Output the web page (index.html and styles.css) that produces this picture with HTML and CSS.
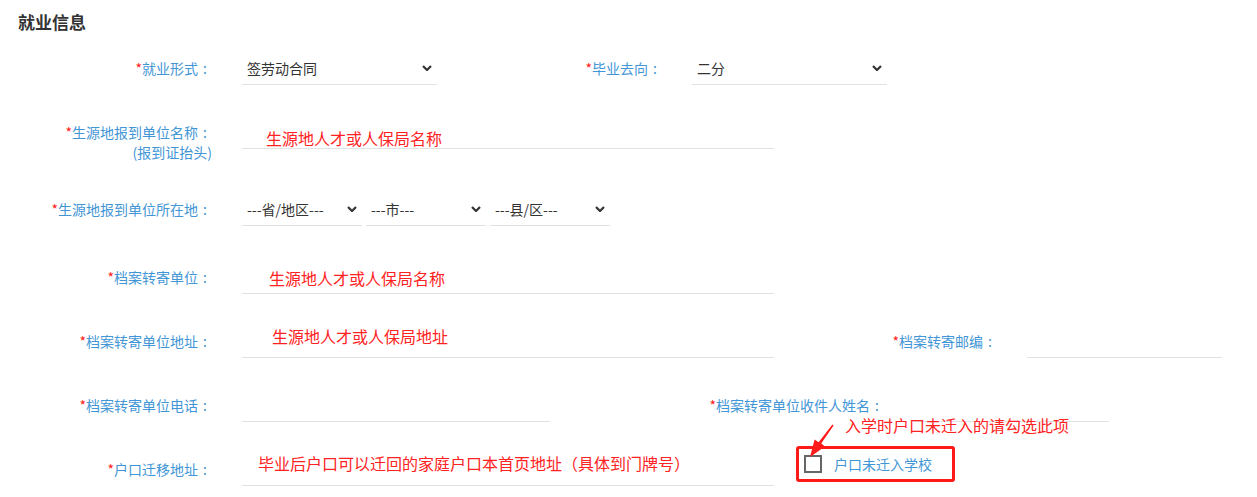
FILE: index.html
```html
<!DOCTYPE html>
<html lang="zh-CN">
<head>
    <meta charset="UTF-8">
    <meta name="viewport" content="width=device-width, initial-scale=1.0">
    <title>就业信息</title>
    <link rel="stylesheet" href="styles.css">
</head>
<body>
    <h2 class="title">就业信息</h2>

    <form class="job-form">
        <!-- 就业形式 / 毕业去向 -->
        <div class="row">
            <label class="label"><i>*</i>就业形式<b>:</b></label>
            <div class="select w195">
                <select><option>签劳动合同</option></select>
                <svg class="arrow" viewBox="0 0 10 6" width="10" height="6"><path d="M1 1l4 4 4-4" /></svg>
            </div>
            <label class="label lab-go"><i>*</i>毕业去向<b>:</b></label>
            <div class="select w195">
                <select><option>二分</option></select>
                <svg class="arrow" viewBox="0 0 10 6" width="10" height="6"><path d="M1 1l4 4 4-4" /></svg>
            </div>
        </div>

        <div class="row">
            <label class="label"><i>*</i>生源地报到单位名称<b>:</b><br>(报到证抬头)</label>
            <div class="field w532">
                <span class="note note-1">生源地人才或人保局名称</span>
            </div>
        </div>

        <div class="row">
            <label class="label"><i>*</i>生源地报到单位所在地<b>:</b></label>
            <div class="select w120">
                <select><option>---省/地区---</option></select>
                <svg class="arrow" viewBox="0 0 10 6" width="10" height="6"><path d="M1 1l4 4 4-4" /></svg>
            </div>
            <div class="select w120 ml4">
                <select><option>---市---</option></select>
                <svg class="arrow" viewBox="0 0 10 6" width="10" height="6"><path d="M1 1l4 4 4-4" /></svg>
            </div>
            <div class="select w120 ml4">
                <select><option>---县/区---</option></select>
                <svg class="arrow" viewBox="0 0 10 6" width="10" height="6"><path d="M1 1l4 4 4-4" /></svg>
            </div>
        </div>

        <div class="row spaced">
            <label class="label"><i>*</i>档案转寄单位<b>:</b></label>
            <div class="field w532">
                <span class="note note-2">生源地人才或人保局名称</span>
            </div>
        </div>

        <div class="row">
            <label class="label"><i>*</i>档案转寄单位地址<b>:</b></label>
            <div class="field w532">
                <span class="note note-3">生源地人才或人保局地址</span>
            </div>
            <label class="label lab-zip"><i>*</i>档案转寄邮编<b>:</b></label>
            <div class="field w195"></div>
        </div>

        <div class="row">
            <label class="label"><i>*</i>档案转寄单位电话<b>:</b></label>
            <div class="field w308"></div>
            <label class="label lab-name"><i>*</i>档案转寄单位收件人姓名<b>:</b></label>
            <div class="field w195"></div>
        </div>

        <div class="row">
            <label class="label"><i>*</i>户口迁移地址<b>:</b></label>
            <div class="field w532">
                <span class="note note-4">毕业后户口可以迁回的家庭户口本首页地址（具体到门牌号）</span>
            </div>
            <div class="hukou">
                <span class="check"></span>
                <span class="check-text">户口未迁入学校</span>
                <!-- 红色标注 -->
                <svg class="mark-arrow" viewBox="0 0 40 40" width="40" height="40">
                    <polygon points="33.6,5.4 21.2,23.6 25,26.4 10,37 14.6,19.6 18.6,22.2 32.4,4.6" />
                </svg>
                <span class="tip">入学时户口未迁入的请勾选此项</span>
            </div>
        </div>
    </form>
</body>
</html>
```

FILE: styles.css
```css
body {
    margin: 0;
    background-color: #fff;
    font-family: "Microsoft YaHei", "Noto Sans CJK SC", sans-serif;
    color: #333;
}

.title {
    margin: 0;
    padding: 10px 18px 0;
    font-size: 17px;
    line-height: 24px;
    font-weight: bold;
    color: #333;
}

.job-form {
    margin-top: 17px;
}

.row {
    display: flex;
    align-items: flex-start;
}

.row + .row {
    margin-top: 30px;
}

.row.spaced {
    margin-top: 34px;
}

/* 左边的标签 */
.label {
    flex: none;
    width: 212px;
    margin-right: 30px;
    padding-top: 7px;
    font-size: 14px;
    line-height: 20px;
    text-align: right;
    color: #4396d6;
}

.label i {
    font-style: normal;
    color: #ff1a1a;
}

/* 冒号占一个全角宽度, 居中 */
.label b {
    display: inline-block;
    width: 14px;
    font-weight: normal;
    text-align: center;
}

.lab-go {
    width: 225px;
}

.lab-zip {
    width: 223px;
}

.lab-name {
    width: 334px;
}

.field,
.select {
    position: relative;
    flex: none;
    height: 34px;
    box-sizing: border-box;
    border-bottom: 1px solid #e2e2e2;
}

.w532 { width: 532px; }
.w308 { width: 308px; }
.w195 { width: 195px; }
.w120 { width: 120px; }
.ml4 { margin-left: 4px; }

.select select {
    appearance: none;
    -webkit-appearance: none;
    width: 100%;
    height: 33px;
    padding: 0 20px 0 5px;
    border: none;
    background: transparent;
    font-family: inherit;
    font-size: 14px;
    color: #333;
    outline: none;
}

.select .arrow {
    position: absolute;
    right: 5px;
    top: 14px;
    pointer-events: none;
}

.select .arrow path {
    fill: none;
    stroke: #333;
    stroke-width: 2.2;
}

/* 红色的说明文字 */
.note {
    position: absolute;
    font-size: 16px;
    line-height: 20px;
    color: #ff2222;
    white-space: nowrap;
}

.note-1 { left: 24px; top: 13px; }
.note-2 { left: 27px; top: 8px; }
.note-3 { left: 30px; top: 2px; }
.note-4 { left: 16px; top: 1px; }

.hukou {
    position: relative;
    display: flex;
    align-items: center;
    width: 159px;
    height: 36px;
    box-sizing: border-box;
    margin: -6px 0 0 22px;
    padding-left: 5px;
    border: 3px solid #ff1a1a;
    border-radius: 3px;
}

.check {
    width: 18px;
    height: 18px;
    box-sizing: border-box;
    border: 2px solid #666;
    background: #fff;
}

.check-text {
    margin-left: 12px;
    font-size: 14px;
    color: #4396d6;
}

.mark-arrow {
    position: absolute;
    left: 1px;
    top: -29px;
}

.mark-arrow polygon {
    fill: #ff1a1a;
}

.tip {
    position: absolute;
    left: 46px;
    top: -34px;
    font-size: 16px;
    line-height: 20px;
    color: #ff2222;
    white-space: nowrap;
}
```
